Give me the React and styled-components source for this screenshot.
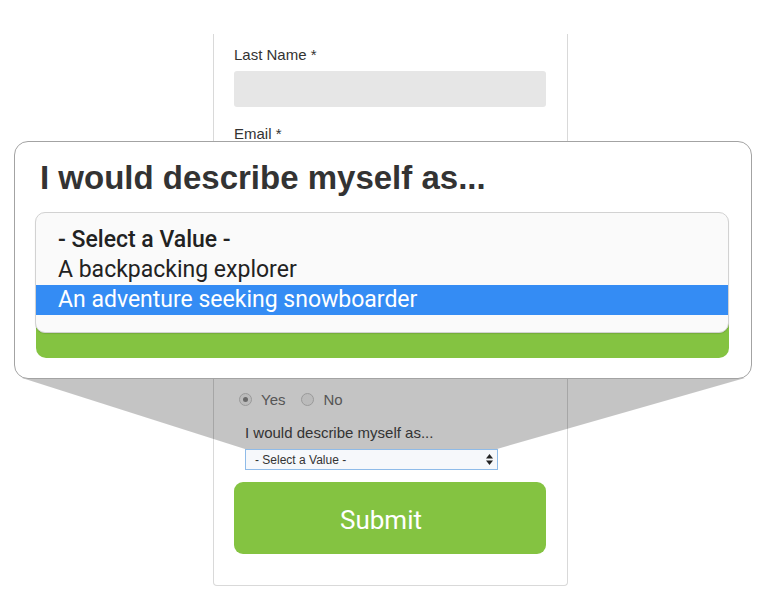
import styled, { createGlobalStyle } from "styled-components";

// ----- Global -----
const GlobalStyle = createGlobalStyle`
  html, body {
    margin: 0;
    padding: 0;
    background: #ffffff;
  }
  * { box-sizing: border-box; }
`;

// ----- Page -----
const Page = styled.div`
  position: relative;
  width: 783px;
  height: 604px;
  overflow: hidden;
  background: #fff;
  font-family: "Liberation Sans", Arial, sans-serif;
  padding: 34px 0 0 213px;
`;

// ----- Background form -----
const FormCard = styled.div`
  width: 355px;
  height: 552px;
  display: flex;
  flex-direction: column;
  border: 1px solid #d9d9d9;
  border-top: none;
  border-radius: 0 0 4px 4px;
  padding: 0 21px 31px 20px;
  background: #fff;
`;

const Label = styled.div`
  font-size: 15px;
  line-height: 18px;
  color: #333;
  margin-top: ${(p) => p.$top || 0}px;
`;

const TextInput = styled.div`
  height: 36px;
  margin-top: 7px;
  background: #e6e6e6;
  border-radius: 3px;
`;

const BottomGroup = styled.div`
  margin-top: auto;
  display: flex;
  flex-direction: column;
`;

const SmallLabel = styled.div`
  font-size: 15px;
  line-height: 16px;
  color: #444;
  padding-left: 11px;
  white-space: nowrap;
`;

const RadioRow = styled.div`
  display: flex;
  align-items: center;
  gap: 6px;
  padding-left: 5px;
  margin-top: 14px;
  margin-bottom: 18px;
  height: 16px;
`;

const RadioItem = styled.label`
  display: flex;
  align-items: center;
  gap: 9px;
  font-size: 15px;
  color: #707070;
  margin-right: 10px;
`;

const Radio = styled.span`
  width: 13px;
  height: 13px;
  border-radius: 50%;
  border: 1px solid #c9c9c9;
  background: #f4f4f4;
  display: flex;
  align-items: center;
  justify-content: center;

  &::after {
    content: "";
    width: 5px;
    height: 5px;
    border-radius: 50%;
    background: ${(p) => (p.$checked ? "#8a8a8a" : "transparent")};
  }
`;

const MiniSelect = styled.div`
  position: relative;
  z-index: 2;
  margin: 8px 0 0 11px;
  width: 253px;
  height: 21px;
  border: 1px solid #8fbbe8;
  background: #f6f8fb;
  display: flex;
  align-items: center;
  justify-content: space-between;
  padding: 0 4px 0 9px;
  font-size: 12px;
  color: #333;
`;

const SubmitButton = styled.button`
  margin-top: 12px;
  height: 72px;
  border: none;
  border-radius: 9px;
  background: #84c341;
  color: #fff;
  padding: 4px 18px 0 0;
  font-family: Roboto, "Liberation Sans", sans-serif;
  font-size: 26px;
  font-weight: 400;
  cursor: pointer;
`;

// ----- Magnifier shadow -----
const Beam = styled.svg`
  position: absolute;
  left: 0;
  top: 0;
  z-index: 1;
  pointer-events: none;
`;

// ----- Magnified callout -----
const Callout = styled.div`
  position: absolute;
  z-index: 3;
  left: 14px;
  top: 141px;
  width: 738px;
  border: 1px solid #a3a3a3;
  border-radius: 14px;
  background: #fff;
  padding: 16px 22px 20px 20px;
  display: flex;
  flex-direction: column;
`;

const CalloutTitle = styled.h2`
  margin: 0 0 14px 5px;
  font-size: 33px;
  line-height: 40px;
  font-weight: 700;
  color: #333;
`;

const OptionList = styled.div`
  position: relative;
  z-index: 1;
  border: 1px solid #d2d2d2;
  border-radius: 10px;
  background: #fafafa;
  padding: 12px 0 17px;
  box-shadow: 0 1px 1px rgba(0, 0, 0, 0.12);
  font-family: Roboto, "Liberation Sans", sans-serif;
`;

const Option = styled.div`
  height: 30px;
  line-height: 30px;
  padding-left: 22px;
  font-size: 23px;
  font-weight: ${(p) => (p.$placeholder ? 500 : 400)};
  color: ${(p) => (p.$active ? "#fff" : "#222")};
  background: ${(p) => (p.$active ? "#348cf4" : "transparent")};
`;

const GreenBar = styled.div`
  margin: -30px 0 0 1px;
  height: 55px;
  background: #84c341;
  border-radius: 0 0 10px 10px;
`;

function SelectArrows() {
  return (
    <svg width="7" height="11" viewBox="0 0 7 11">
      <path d="M3.5 0 L7 4.5 L0 4.5 Z" fill="#222" />
      <path d="M0 6.5 L7 6.5 L3.5 11 Z" fill="#222" />
    </svg>
  );
}

export default function App() {
  return (
    <>
      <GlobalStyle />
      <Page>
        <FormCard>
          <Label $top={12}>Last Name *</Label>
          <TextInput />
          <Label $top={18}>Email *</Label>
          <TextInput />

          <BottomGroup>
            <SmallLabel>My family has gone hiking together many times</SmallLabel>
            <RadioRow>
              <RadioItem>
                <Radio $checked />
                Yes
              </RadioItem>
              <RadioItem>
                <Radio />
                No
              </RadioItem>
            </RadioRow>
            <SmallLabel>I would describe myself as...</SmallLabel>
            <MiniSelect>
              <span>- Select a Value -</span>
              <SelectArrows />
            </MiniSelect>
            <SubmitButton>Submit</SubmitButton>
          </BottomGroup>
        </FormCard>

        <Beam width="783" height="604" viewBox="0 0 783 604">
          <polygon points="22,378 745,378 497,449 245,449" fill="rgba(0,0,0,0.23)" />
        </Beam>

        <Callout>
          <CalloutTitle>I would describe myself as...</CalloutTitle>
          <OptionList>
            <Option $placeholder>- Select a Value -</Option>
            <Option>A backpacking explorer</Option>
            <Option $active>An adventure seeking snowboarder</Option>
          </OptionList>
          <GreenBar />
        </Callout>
      </Page>
    </>
  );
}
